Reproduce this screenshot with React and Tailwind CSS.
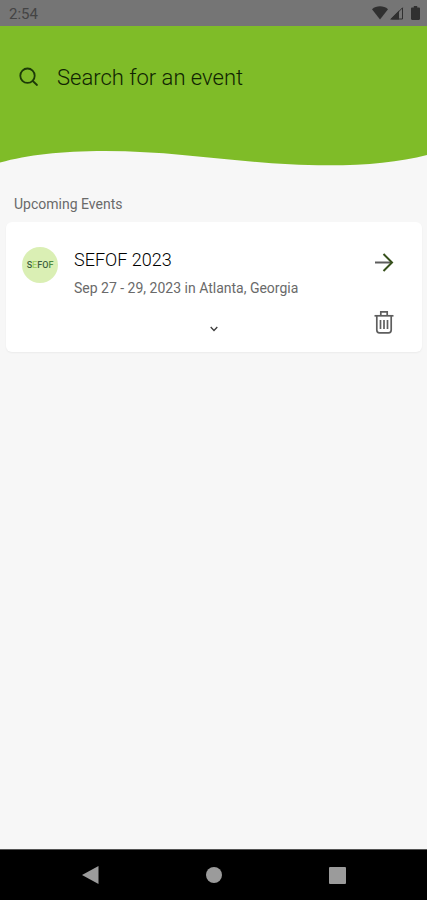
// src/App.jsx
import { useState } from "react";

const EVENTS = [
  {
    id: 1,
    title: "SEFOF 2023",
    details: "Sep 27 - 29, 2023 in Atlanta, Georgia",
  },
];

function StatusBar() {
  return (
    <div className="h-[26px] bg-[#757575] flex items-center justify-between pl-[9px] pr-[7px] text-[#444444]">
      <span className="text-[15px] leading-5 pt-0.5">2:54</span>
      <div className="flex items-center text-[#303030]">
        <svg className="w-4 h-[14px]" viewBox="0 0 16 14" fill="currentColor">
          <path d="M0 3.2C4.4-.6 11.6-.6 16 3.2L8 13.4z" />
        </svg>
        <svg className="w-[14px] h-[14px] ml-0.5" viewBox="0 0 14 14" fill="none">
          <path d="M0 13.5L9 4.5v9z" fill="currentColor" />
          <path d="M1.5 13L12.5 1.8V13z" stroke="currentColor" />
        </svg>
        <svg className="w-[9px] h-[14px] ml-[7px]" viewBox="0 0 9 14" fill="currentColor">
          <path d="M2.8 0h3.4v1.4h1.6c.7 0 1.2.5 1.2 1.2v10.2c0 .7-.5 1.2-1.2 1.2H1.2C.5 14 0 13.5 0 12.8V2.6c0-.7.5-1.2 1.2-1.2h1.6z" />
        </svg>
      </div>
    </div>
  );
}

function SearchHeader() {
  const [query, setQuery] = useState("");

  return (
    <header>
      <div className="h-[124px] bg-[#7fbc28] px-[19px] pt-[35px]">
        <label className="flex items-center gap-[18px]">
          <svg className="w-5 h-5 shrink-0" viewBox="0 0 20 20" fill="none" stroke="#1c3a08" strokeWidth="1.8" strokeLinecap="round">
            <circle cx="8.5" cy="8.7" r="7.2" />
            <path d="M13.8 14L18 18" />
          </svg>
          <input
            type="text"
            aria-label="Search for an event"
            placeholder="Search for an event"
            value={query}
            onChange={(e) => setQuery(e.target.value)}
            className="flex-1 min-w-0 h-8 bg-transparent outline-none text-[22px] font-light text-[#102402] placeholder:text-[#102402]"
          />
        </label>
      </div>

      {/* wavy bottom edge */}
      <svg className="block w-full h-4" viewBox="0 0 427 16" preserveAspectRatio="none" fill="#7fbc28">
        <path d="M0 0H427V5C400 12 368 15.3 328 15.3C245 15.3 185 1 105 1C60 1 28 5 0 12.5z" />
      </svg>
    </header>
  );
}

function EventCard({ event, onDelete }) {
  return (
    <li className="bg-white rounded-md shadow-xs px-4 pt-[25px] pb-[18px]">
      <div className="flex items-start">
        <div className="w-9 h-9 shrink-0 rounded-full bg-[#daefb4] flex items-center justify-center text-[9px] leading-none font-medium">
          <span className="text-[#3f5f40]">S</span>
          <span className="text-[#a3cf62]">E</span>
          <span className="text-[#3f5f40]">FO</span>
          <span className="text-[#4f8a3f]">F</span>
        </div>
        <div className="flex-1 min-w-0 ml-4 pt-px">
          <h3 className="text-lg leading-6 font-light text-black">{event.title}</h3>
          <p className="mt-2 text-sm leading-4 text-[#6a6a6a]">{event.details}</p>
        </div>
        <button type="button" aria-label="Open event" className="mr-3 mt-[5px]">
          <svg className="w-5 h-5" viewBox="0 0 20 20" fill="none" strokeWidth="2">
            <path d="M1 10.5H17" stroke="#5c5c5c" />
            <path d="M9.5 2L18 10.5L9.5 19" stroke="#36501b" />
          </svg>
        </button>
      </div>
      <div className="grid grid-cols-3 items-center mt-[14px]">
        <button type="button" aria-label="Show more" className="col-start-2 justify-self-center pt-[14px]">
          <svg className="block w-2 h-2" viewBox="0 0 8 8" fill="none" stroke="#3d3d3d" strokeWidth="1.3">
            <path d="M.7 2L4 5.5L7.3 2" />
          </svg>
        </button>
        <button
          type="button"
          aria-label="Delete event"
          className="justify-self-end mr-3"
          onClick={() => onDelete(event.id)}
        >
          <svg className="block w-5 h-6" viewBox="0 0 20 24" fill="none" stroke="#5e5e5e" strokeWidth="1.7">
            <path d="M.5 5.8H19.5" />
            <path d="M6.8 5.5V1.8H13.2V5.5" />
            <path d="M2.8 6V20C2.8 22 3.8 22.8 5.5 22.8H14.5C16.2 22.8 17.2 22 17.2 20V6" />
            <path d="M6.5 10V19M10 10V19M13.5 10V19" />
          </svg>
        </button>
      </div>
    </li>
  );
}

function NavBar() {
  return (
    <nav className="h-[51px] shrink-0 bg-black border-t border-[#555555] flex items-center justify-between px-[66px] text-[#9b9b9b]">
      <button type="button" aria-label="Back" className="w-12 flex justify-center">
        <svg className="w-[17px] h-[18px]" viewBox="0 0 17 18" fill="currentColor">
          <path d="M0 9L16.5 0V18z" />
        </svg>
      </button>
      <button type="button" aria-label="Home" className="w-12 flex justify-center">
        <span className="w-4 h-4 rounded-full bg-[#9b9b9b]" />
      </button>
      <button type="button" aria-label="Recent apps" className="w-12 flex justify-center">
        <span className="w-[17px] h-[17px] rounded-[1px] bg-[#9b9b9b]" />
      </button>
    </nav>
  );
}

export default function App() {
  const [events, setEvents] = useState(EVENTS);

  // remove the event from the list
  const deleteEvent = (id) => {
    setEvents(events.filter((event) => event.id !== id));
  };

  return (
    <div className="min-h-screen flex flex-col bg-[#f7f7f7] font-['Roboto',sans-serif]">
      <StatusBar />
      <SearchHeader />
      <main className="flex-1 pl-1.5 pr-[5px] pt-7">
        <h2 className="px-2 text-sm leading-5 text-[#6a6a6a]">Upcoming Events</h2>
        <ul className="mt-2">
          {events.map((event) => (
            <EventCard key={event.id} event={event} onDelete={deleteEvent} />
          ))}
        </ul>
      </main>
      <NavBar />
    </div>
  );
}
